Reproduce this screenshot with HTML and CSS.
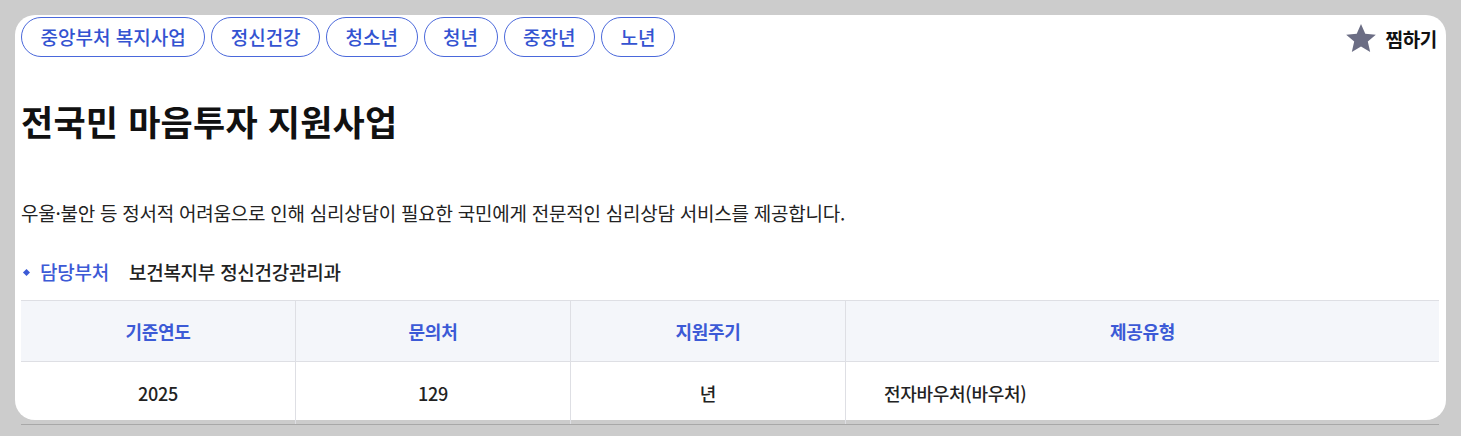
FILE: index.html
```html
<!DOCTYPE html>
<html lang="ko">
<head>
<meta charset="UTF-8">
<meta name="viewport" content="width=device-width, initial-scale=1.0">
<title>전국민 마음투자 지원사업</title>
<link rel="stylesheet" href="styles.css">
</head>
<body>

<div class="card">
    <div class="top-row">
        <ul class="tags">
            <li>중앙부처 복지사업</li>
            <li>정신건강</li>
            <li>청소년</li>
            <li>청년</li>
            <li>중장년</li>
            <li>노년</li>
        </ul>
        <button class="bookmark">
            <svg width="32" height="31" viewBox="0 0 24 23">
                <path d="M12 0.6l3.2 7.3 7.9.7-6 5.2 1.8 7.8L12 17.5l-6.9 4.1 1.8-7.8-6-5.2 7.9-.7z" fill="#6b6d84"/>
            </svg>
            <span>찜하기</span>
        </button>
    </div>

    <h1 class="title">전국민 마음투자 지원사업</h1>

    <p class="desc">우울·불안 등 정서적 어려움으로 인해 심리상담이 필요한 국민에게 전문적인 심리상담 서비스를 제공합니다.</p>

    <div class="dept">
        <span class="dept-label">담당부처</span>
        <span class="dept-value">보건복지부 정신건강관리과</span>
    </div>

    <table class="info">
        <thead>
            <tr>
                <th class="col-narrow">기준연도</th>
                <th class="col-narrow">문의처</th>
                <th class="col-narrow">지원주기</th>
                <th>제공유형</th>
            </tr>
        </thead>
        <tbody>
            <tr>
                <td>2025</td>
                <td>129</td>
                <td>년</td>
                <td class="left">전자바우처(바우처)</td>
            </tr>
        </tbody>
    </table>
</div>

</body>
</html>
```

FILE: styles.css
```css
body {
    margin: 0;
    padding: 15px;
    background-color: #cccccc;
    font-family: "Noto Sans CJK KR", "Noto Sans", sans-serif;
    color: #111;
}
.card {
    height: 405px;
    box-sizing: border-box;
    padding: 2px 7px 0 6px;
    background-color: #fff;
    border-radius: 20px;
}
.top-row {
    display: flex;
    justify-content: space-between;
    align-items: center;
}
.tags {
    display: flex;
    gap: 6px;
    margin: 0;
    padding: 0;
    list-style: none;
}
.tags li {
    height: 40px;
    box-sizing: border-box;
    padding: 0 18.5px;
    border: 1px solid #4a68db;
    border-radius: 20px;
    color: #3453d1;
    font-size: 19px;
    font-weight: 500;
    line-height: 37px;
    letter-spacing: 0;
}
.bookmark {
    display: flex;
    align-items: center;
    gap: 8px;
    margin: 2px 2px 0 0;
    padding: 0;
    border: none;
    background: none;
    font-family: inherit;
    font-size: 19px;
    font-weight: 700;
    color: #111;
    letter-spacing: -0.3px;
}
.title {
    margin: 40px 0 0;
    font-size: 35px;
    font-weight: 700;
    line-height: 48px;
    letter-spacing: 0.2px;
}
.desc {
    margin: 54px 0 0;
    font-size: 19px;
    line-height: 28px;
    letter-spacing: -0.25px;
    color: #222;
}
.dept {
    display: flex;
    align-items: center;
    margin-top: 32px;
    font-size: 19px;
    font-weight: 500;
    line-height: 26px;
    letter-spacing: -0.25px;
}
.dept-label {
    display: flex;
    align-items: center;
    gap: 11px;
    color: #3c5ad6;
    margin-right: 20px;
}
.dept-label::before {
    content: "";
    width: 5px;
    height: 5px;
    margin-left: 3px;
    background-color: #3c5ad6;
    transform: rotate(45deg);
}
.dept-value {
    color: #222;
}
.info {
    width: 100%;
    margin-top: 15px;
    border-collapse: collapse;
    font-size: 18px;
    font-weight: 500;
    letter-spacing: -0.3px;
}
.info th,
.info td {
    height: 60px;
    padding: 0;
    border: 1px solid #dedfe4;
    text-align: center;
}
.info tr > :first-child {
    border-left: none;
}
.info tr > :last-child {
    border-right: none;
}
.info th {
    background-color: #f4f6fa;
    color: #3c5ad6;
}
.info td {
    color: #222;
    height: 62px;
    border-bottom: 1px solid #a8a8a8;
}
.col-narrow {
    width: 274px;
}
.info td.left {
    text-align: left;
    padding-left: 38px;
}
```
